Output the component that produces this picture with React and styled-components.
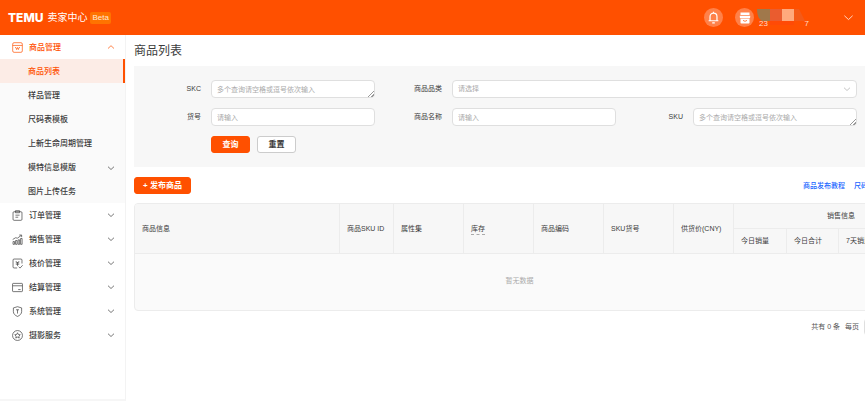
import { useState } from "react"
import styled, { createGlobalStyle } from "styled-components"

const ORANGE = "#ff5000"

const GlobalStyle = createGlobalStyle`
  * {
    box-sizing: border-box;
  }
  body {
    margin: 0;
    background: #fff;
    color: #3c3c3c;
    overflow-x: hidden;
    font-family: "Liberation Sans", "Noto Sans CJK SC", sans-serif;
    font-size: 7px;
    line-height: 12px;
  }
  button, input, select, textarea {
    font: inherit;
    color: inherit;
    margin: 0;
  }
  h1, ul, p {
    margin: 0;
    padding: 0;
  }
  ul {
    list-style: none;
  }
`;

const Header = styled.header`
  display: flex;
  align-items: center;
  height: 35px;
  padding: 0 11px 0 8px;
  background: ${ORANGE};
  color: #fff;
`;

const Logo = styled.a`
  font-family: Inter, sans-serif;
  font-size: 12px;
  font-weight: 800;
  color: #fff;
  text-decoration: none;
`;

const SiteName = styled.span`
  margin-left: 4px;
  font-size: 10px;
`;

const Beta = styled.span`
  margin-left: 3px;
  padding: 0 2px;
  border-radius: 2px;
  background: #ff7300;
  color: #ffe9d6;
  font-size: 8px;
`;

const HeaderRight = styled.div`
  display: flex;
  align-items: center;
  margin-left: auto;
`;

const RoundButton = styled.button`
  display: flex;
  align-items: center;
  justify-content: center;
  width: 19px;
  height: 19px;
  margin-right: 12px;
  padding: 0;
  border: 0;
  border-radius: 50%;
  background: #ff8149;
`;

const Account = styled.button`
  display: flex;
  align-items: center;
  padding: 0;
  border: 0;
  background: none;
  color: #ffd9c8;
`;

const Avatar = styled.span`
  display: flex;
  align-items: center;
  justify-content: center;
  width: 19px;
  height: 19px;
  border-radius: 50%;
  background: #ff8149;
`;

const Shop = styled.span`
  position: relative;
  display: flex;
  align-items: flex-end;
  justify-content: space-between;
  width: 52px;
  height: 22px;
  margin: 0 34px 0 3px;
  padding: 0 0 0 2px;
  font-size: 8px;
  line-height: 10px;
`;

const Mosaic = styled.svg`
  position: absolute;
  top: 2px;
  left: 0;
`;

const Body = styled.div`
  display: flex;
  min-height: calc(100vh - 35px);
`;

const Sidebar = styled.nav`
  flex: 0 0 126px;
  border-right: 1px solid #f3f3f3;
  border-bottom: 2px solid #f6f6f6;
  font-size: 8px;
`;

const Group = styled.button`
  display: flex;
  align-items: center;
  width: 100%;
  height: 24px;
  padding: 0 10px 0 12px;
  border: 0;
  background: none;
  color: ${(p) => (p.$open ? ORANGE : "#3c3c3c")};
  font-weight: 500;
  text-align: left;

  span {
    flex: 1;
    margin-left: 6px;
    padding-top: 2px;
  }
`;

const SubMenu = styled.ul`
  background: #fafafa;
`;

const SubLink = styled.a`
  display: flex;
  align-items: center;
  justify-content: space-between;
  height: 24px;
  padding: 2px ${(p) => (p.$active ? 8 : 10)}px 0 28px;
  border-right: ${(p) => (p.$active ? `2px solid ${ORANGE}` : "0")};
  background: ${(p) => (p.$active ? "#fcece6" : "transparent")};
  color: ${(p) => (p.$active ? ORANGE : "#3c3c3c")};
  font-weight: 500;
  text-decoration: none;
`;

const Main = styled.main`
  flex: 1 0 auto;
  width: 0;
  min-width: 779px;
  padding: 7px 0 0 8px;
`;

const Title = styled.h1`
  font-size: 12px;
  font-weight: 400;
  line-height: 18px;
`;

const Filters = styled.form`
  display: grid;
  grid-template-columns: repeat(3, 1fr);
  row-gap: 10px;
  margin-top: 6px;
  padding: 14px 48px 14px 0;
  background: #f7f7f7;
`;

const Field = styled.div`
  display: grid;
  grid-template-columns: 67px 1fr;
  column-gap: 10px;
  align-items: start;
  grid-column: span ${(p) => p.$span || 1};
  height: 18px;

  label {
    line-height: 18px;
    text-align: right;
  }
`;

const control = `
  display: block;
  width: 100%;
  height: 18px;
  padding: 0 5px;
  border: 1px solid #dfdfdf;
  border-radius: 4px;
  background: #fff;
  outline: 0;

  &::placeholder {
    color: #aaa;
    opacity: 1;
  }
`;

const Input = styled.input`
  ${control}
`;

const TextArea = styled.textarea`
  ${control}
  padding: 3px 5px;
  line-height: 12px;
  overflow: hidden;
  resize: vertical;

  &::-webkit-resizer {
    background: linear-gradient(135deg, transparent 48%, #999 48% 58%, transparent 58% 74%, #999 74% 84%, transparent 84%) no-repeat right bottom / 6px 6px;
  }
`;

const SelectBox = styled.div`
  display: flex;
  align-items: center;
  height: 18px;
  padding-right: 5px;
  border: 1px solid #dfdfdf;
  border-radius: 4px;
  background: #fff;
  color: #aaa;

  select {
    flex: 1;
    min-width: 0;
    height: 16px;
    padding: 0 5px;
    border: 0;
    outline: 0;
    background: none;
    appearance: none;
  }
`;

const Actions = styled.div`
  display: flex;
  gap: 7px;
  grid-column: 1 / -1;
  padding-left: 77px;
`;

const Button = styled.button`
  min-width: 39px;
  height: 17px;
  padding: 0 8px;
  border: 1px solid ${(p) => (p.$primary ? ORANGE : "#ccc")};
  border-radius: 3px;
  background: ${(p) => (p.$primary ? ORANGE : "#fff")};
  color: ${(p) => (p.$primary ? "#fff" : "#3c3c3c")};
  font-size: 8px;
  font-weight: 700;
  line-height: 14px;
`;

const Toolbar = styled.div`
  display: flex;
  align-items: center;
  justify-content: space-between;
  margin: 10px 0 9px;
`;

const Links = styled.div`
  display: flex;
  gap: 9px;
  padding-right: 2px;

  a {
    color: #1a66ff;
    font-weight: 500;
    text-decoration: none;
  }
`;

const TableBox = styled.div`
  overflow: hidden;
  border: 1px solid #ececec;
  border-radius: 4px;
  background: #fafafa;
`;

const Table = styled.table`
  width: 814px;
  table-layout: fixed;
  border-collapse: separate;
  border-spacing: 0;
  background: #f7f7f7;
`;

const Th = styled.th`
  height: ${(p) => (p.rowSpan ? 50 : 25)}px;
  padding: 0 7px;
  border-right: 1px solid #ececec;
  border-bottom: 1px solid #ececec;
  font-weight: 400;
  text-align: ${(p) => (p.$center ? "center" : "left")};
  white-space: nowrap;
`;

const Hint = styled.abbr`
  display: inline-block;
  border-bottom: 1px dashed #aaa;
  line-height: 10px;
  text-decoration: none;
`;

const Empty = styled.p`
  padding: 21px 0 23px;
  color: #aaa;
  text-align: center;
`;

const Pager = styled.div`
  display: flex;
  align-items: center;
  justify-content: flex-end;
  gap: 5px;
  margin-top: 7px;
  color: #555;

  div {
    width: 41px;
  }
`;

const Chevron = ({ up, size = 8 }) => (
  <svg width={size} height={size} viewBox="0 0 8 8" fill="none" stroke="currentColor" strokeWidth="0.7">
    <path d={up ? "M1 5.5 4 2.7 7 5.5" : "M1 2.7 4 5.5 7 2.7"} />
  </svg>
);

const icons = {
  goods: (
    <>
      <rect x="1" y="1" width="14" height="14" rx="2" />
      <path d="M1 5h14M4.500 8h1.200l1 3 1.300-3 1.300 3 1-3h1.200" />
    </>
  ),
  order: (
    <>
      <rect x="1.500" y="2.500" width="13" height="12.500" rx="1.500" />
      <path d="M5 1h6v3H5zM5 7.500h6M5 10.500h4" />
    </>
  ),
  sales: (
    <path d="M1.500 11h2.200v4H1.500zM5.200 9.500h2.200V15H5.200zM8.900 8.500h2.200V15H8.900zM12.500 6.500h2.200V15h-2.200zM1 8l4-2.500 3 .5 5.500-4M10.500 1.500h3.500v3" />
  ),
  price: (
    <>
      <path d="M7.500 14.500H3a1.500 1.500 0 0 1-1.500-1.500V3A1.500 1.500 0 0 1 3 1.500h10A1.500 1.500 0 0 1 14.500 3v5M9.500 12.500l2.200 2.200 3.800-4.200" />
      <path d="M5.500 4.500 8 7l2.500-2.500M5.500 7h5M5.500 9h5M8 7v4.500" />
    </>
  ),
  settle: (
    <>
      <rect x="0.800" y="2" width="14.400" height="12" rx="1" />
      <path d="M1 5.500h14M9 11h3.500" />
    </>
  ),
  system: (
    <>
      <path d="M8 1l6 1.800v5.400c0 3.200-2.500 5.500-6 7-3.500-1.500-6-3.800-6-7V2.800z" />
      <path d="M5.800 5.500h4.400M8 5.500v5.500" />
    </>
  ),
  photo: (
    <>
      <circle cx="8" cy="8" r="7.200" />
      <path d="M8 4l1.200 2.500 2.800.4-2 2 .5 2.800L8 10.400l-2.500 1.300.5-2.800-2-2 2.800-.4z" />
    </>
  ),
}

const MenuIcon = ({ name }) => (
  <svg width="11" height="11" viewBox="0 0 16 16" fill="none" stroke="currentColor" strokeWidth="1">
    {icons[name]}
  </svg>
);

const goodsMenu = ["商品列表", "样品管理", "尺码表模板", "上新生命周期管理", "模特信息模版", "图片上传任务"]

const groups = [
  { icon: "order", label: "订单管理" },
  { icon: "sales", label: "销售管理" },
  { icon: "price", label: "核价管理" },
  { icon: "settle", label: "结算管理" },
  { icon: "system", label: "系统管理" },
  { icon: "photo", label: "摄影服务" },
]

const columns = [
  { label: "商品信息", width: 205 },
  { label: "商品SKU ID", width: 54 },
  { label: "属性集", width: 70 },
  { label: "库存", width: 70, hint: "可售库存" },
  { label: "商品编码", width: 70 },
  { label: "SKU货号", width: 70 },
  { label: "供货价(CNY)", width: 60 },
]

const salesColumns = [
  { label: "今日销量", width: 53 },
  { label: "今日合计", width: 52 },
  { label: "7天销量", width: 53 },
  { label: "7天合计" },
]

const App = () => {
  const [open, setOpen] = useState(true);

  return (
    <>
      <GlobalStyle />
      <Header>
        <Logo href="#">TEMU</Logo>
        <SiteName>卖家中心</SiteName>
        <Beta>Beta</Beta>
        <HeaderRight>
          <RoundButton aria-label="消息">
            <svg width="13" height="13" viewBox="0 0 12 12" fill="none" stroke="#fff" strokeWidth="1.1">
              <path d="M6 .8v1M2.800 8.800V5.200a3.200 3.200 0 0 1 6.400 0v3.600M1.500 9h9M4.800 11h2.400" />
            </svg>
          </RoundButton>
          <Account>
            <Avatar>
              <svg width="12" height="12" viewBox="0 0 12 12" fill="#fff">
                <path d="M1.500 .5h9v2.500h-9zM.8 3.800h10.400v1.400a1.200 1.200 0 0 1-1.200 1.200H2A1.200 1.200 0 0 1 .8 5.200z" />
                <path d="M1.500 7h9v3.800a.8.8 0 0 1-.8.8H2.300a.8.8 0 0 1-.8-.8z" />
                <path d="M4 8.400q2 1.800 4 0" fill="none" stroke="#ff8149" strokeWidth="1" />
              </svg>
            </Avatar>
            <Shop>
              <span>23</span>
              <span>7</span>
              <Mosaic width="48" height="16" viewBox="0 0 48 16">
                <path d="M0 0h13v12H5Q0 9 0 0z" fill="#a0784b" />
                <path d="M13 0h12v12H13z" fill="#ea5c2f" />
                <path d="M25 0h12v12H25z" fill="#ffa97d" />
                <path d="M37 0h5l6 12H37z" fill="#f45a18" />
                <path d="M13 12h24v4H13z" fill="#ff4a06" />
              </Mosaic>
            </Shop>
            <Chevron size={11} />
          </Account>
        </HeaderRight>
      </Header>
      <Body>
        <Sidebar>
          <Group $open={open} aria-expanded={open} onClick={() => setOpen(!open)}>
            <MenuIcon name="goods" />
            <span>商品管理</span>
            <Chevron up={open} />
          </Group>
          {open && (
            <SubMenu>
              {goodsMenu.map((label, i) => (
                <li key={label}>
                  <SubLink href="#" $active={i === 0}>
                    {label}
                    {label === "模特信息模版" && <Chevron />}
                  </SubLink>
                </li>
              ))}
            </SubMenu>
          )}
          {groups.map((g) => (
            <Group key={g.icon} aria-expanded={false}>
              <MenuIcon name={g.icon} />
              <span>{g.label}</span>
              <Chevron />
            </Group>
          ))}
        </Sidebar>
        <Main>
          <Title>商品列表</Title>
          <Filters onSubmit={(e) => e.preventDefault()}>
            <Field>
              <label htmlFor="skc">SKC</label>
              <TextArea id="skc" rows={1} placeholder="多个查询请空格或逗号依次输入" />
            </Field>
            <Field $span={2}>
              <label htmlFor="category">商品品类</label>
              <SelectBox>
                <select id="category">
                  <option>请选择</option>
                </select>
                <Chevron />
              </SelectBox>
            </Field>
            <Field>
              <label htmlFor="itemNo">货号</label>
              <Input id="itemNo" placeholder="请输入" />
            </Field>
            <Field>
              <label htmlFor="name">商品名称</label>
              <Input id="name" placeholder="请输入" />
            </Field>
            <Field>
              <label htmlFor="sku">SKU</label>
              <TextArea id="sku" rows={1} placeholder="多个查询请空格或逗号依次输入" />
            </Field>
            <Actions>
              <Button type="submit" $primary>查询</Button>
              <Button type="reset">重置</Button>
            </Actions>
          </Filters>
          <Toolbar>
            <Button $primary>+ 发布商品</Button>
            <Links>
              <a href="#">商品发布教程</a>
              <a href="#">尺码表模板教程</a>
            </Links>
          </Toolbar>
          <TableBox>
            <Table>
              <colgroup>
                {[...columns, ...salesColumns].map((c) => <col key={c.label} width={c.width} />)}
              </colgroup>
              <thead>
                <tr>
                  {columns.map((c) => (
                    <Th key={c.label} rowSpan={2}>
                      {c.hint ? <Hint title={c.hint}>{c.label}</Hint> : c.label}
                    </Th>
                  ))}
                  <Th colSpan={4} $center>销售信息</Th>
                </tr>
                <tr>
                  {salesColumns.map((c) => <Th key={c.label}>{c.label}</Th>)}
                </tr>
              </thead>
            </Table>
            <Empty>暂无数据</Empty>
          </TableBox>
          <Pager>
            <span>共有 0 条</span>
            <label htmlFor="pageSize">每页</label>
            <SelectBox>
              <select id="pageSize">
                <option>10</option>
                <option>20</option>
              </select>
              <Chevron />
            </SelectBox>
          </Pager>
        </Main>
      </Body>
    </>
  );
}

export default App;
